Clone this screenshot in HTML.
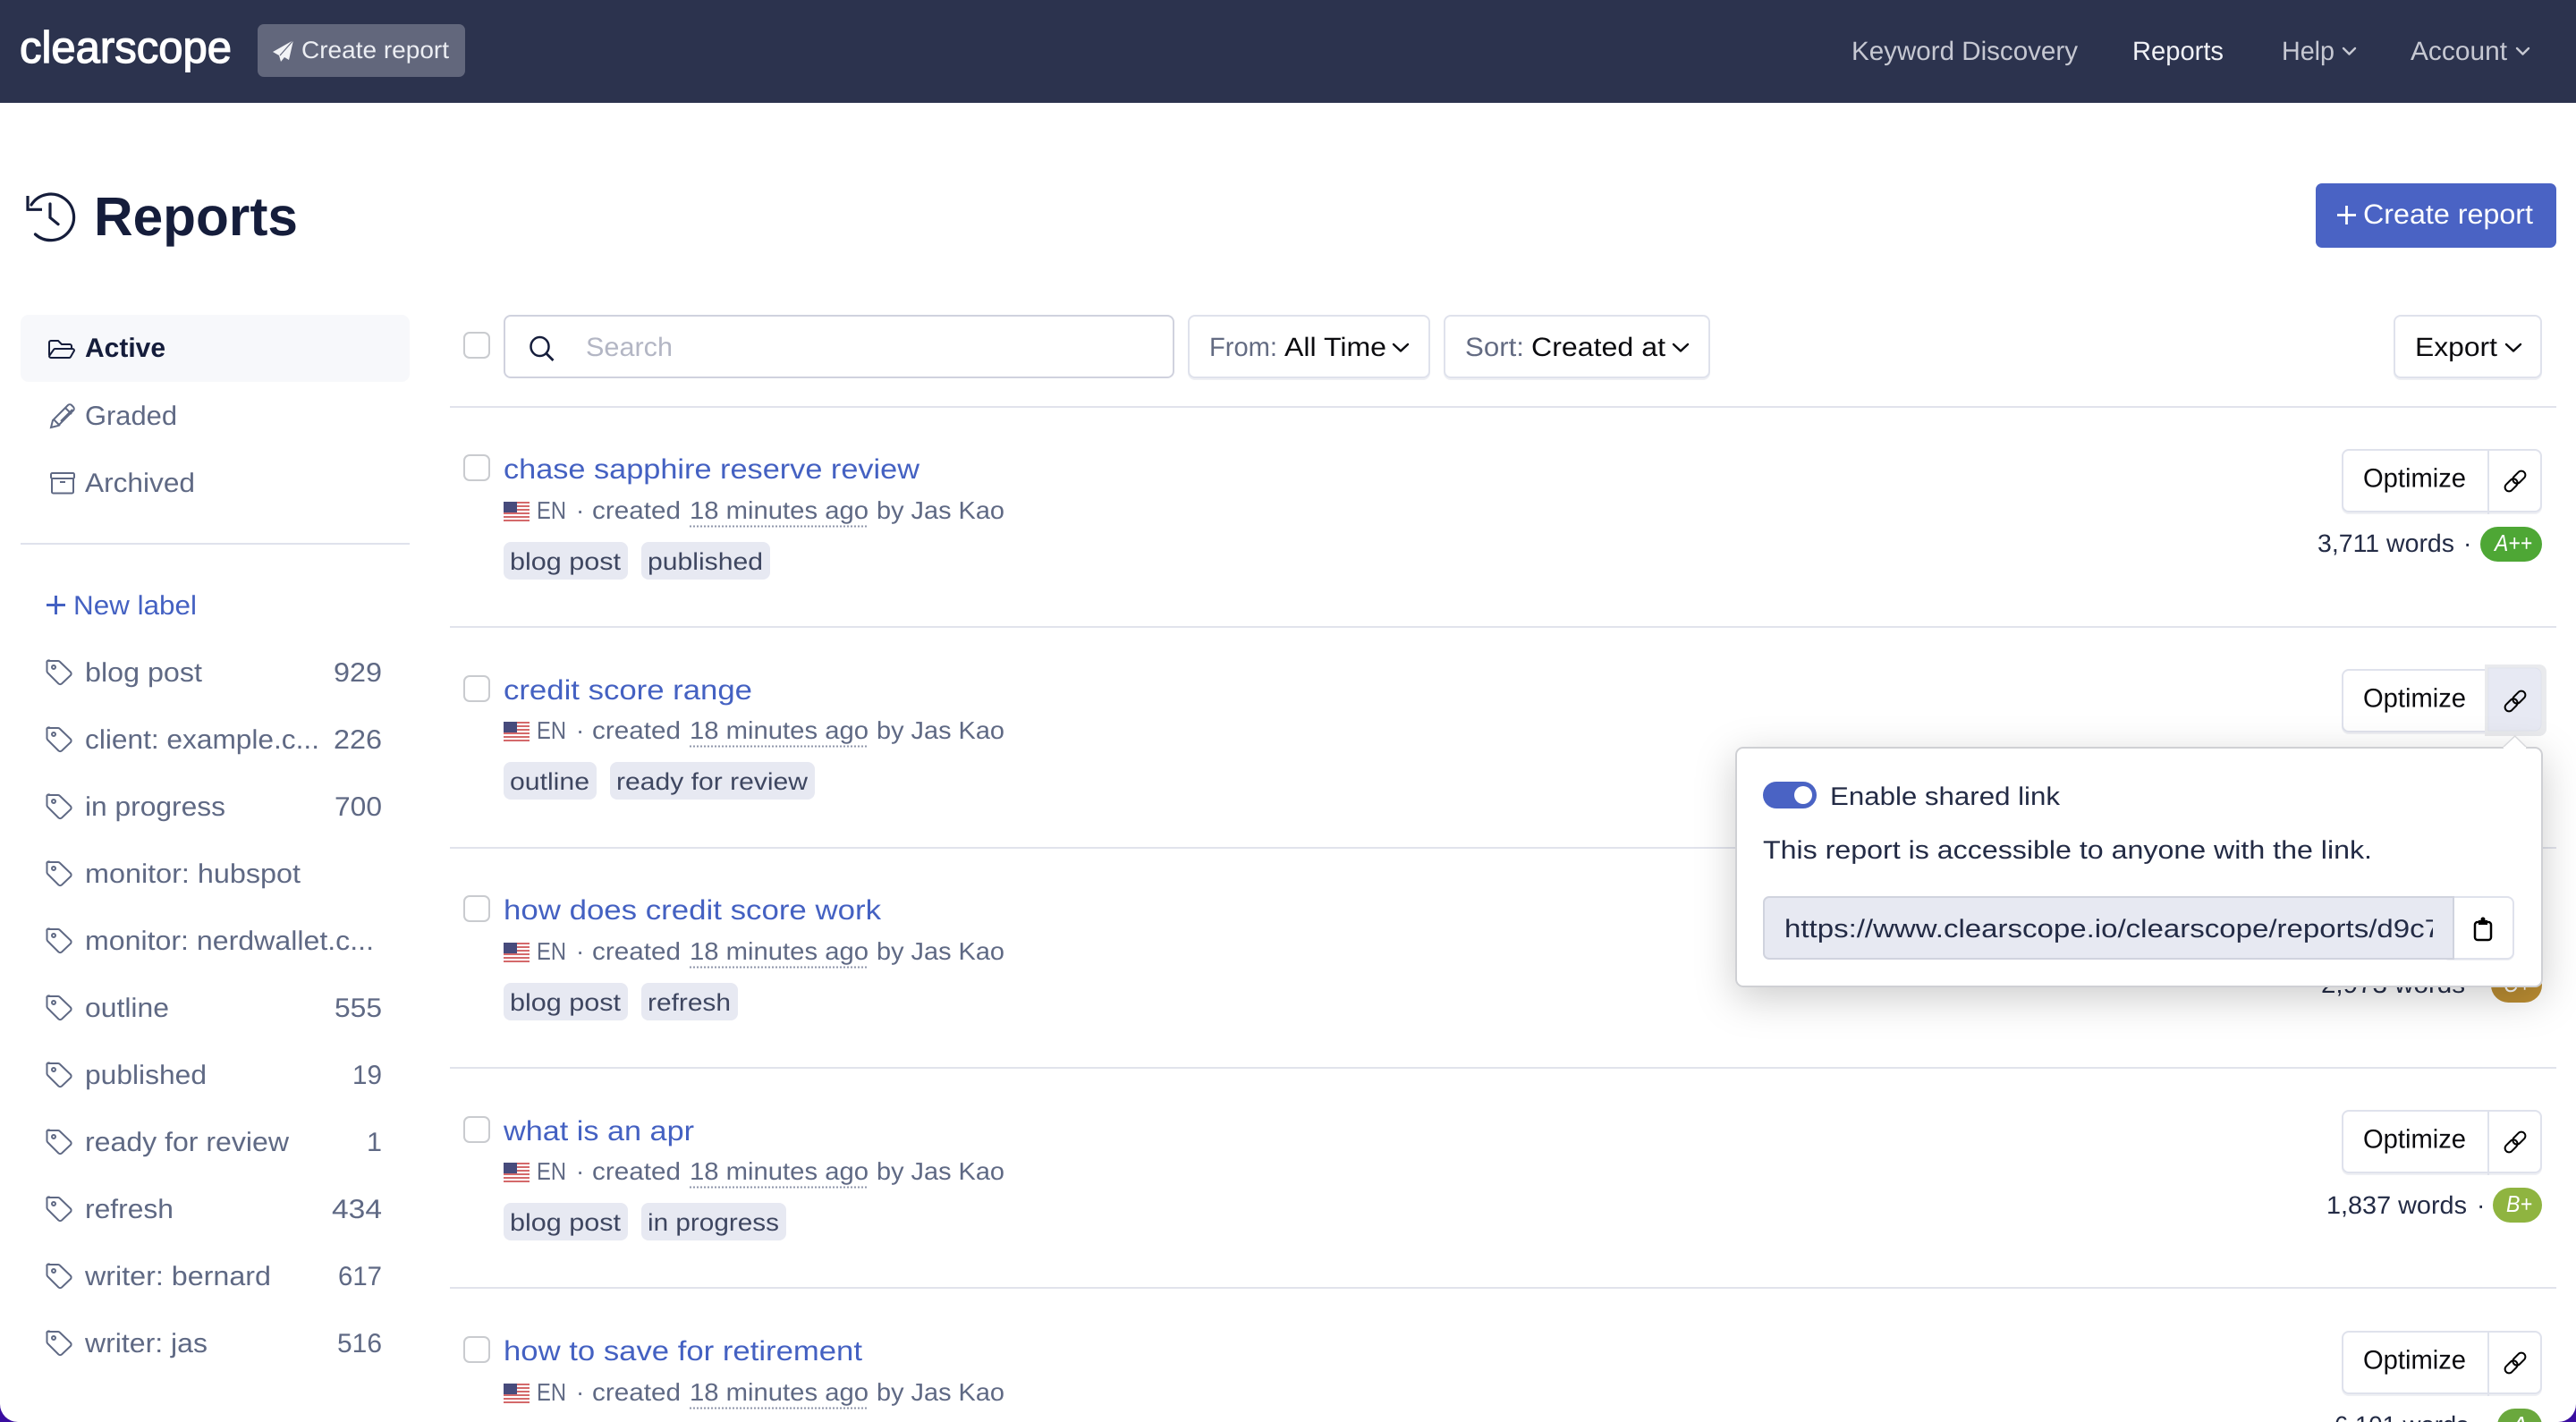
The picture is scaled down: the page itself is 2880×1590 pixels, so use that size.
<!DOCTYPE html>
<html lang="en"><head><meta charset="utf-8"><title>Reports - Clearscope</title>
<style>
html,body{margin:0;padding:0;background:#fff;width:2880px;height:1590px;overflow:hidden}
svg{display:block}
text{font-family:"Liberation Sans",Arial,sans-serif;text-rendering:geometricPrecision;white-space:pre}
.s{font-size:30px;fill:#5f6984}
.nav{font-size:29.5px;fill:#c6c8d2}
.ti{font-size:31px;fill:#4461c2}
.m{font-size:27.5px;fill:#5f6984}
.tg{font-size:27px;fill:#3e4660}
.b{font-size:29.5px;fill:#0b0b0f}
.w{font-size:28px;fill:#232b45}
.p{font-size:28.5px;fill:#232b45}
.g{font-size:26px;fill:#fff;font-style:italic}
.ln{fill:none;stroke:#000;stroke-width:2}
.ch{fill:none;stroke-width:2.4;stroke-linecap:round;stroke-linejoin:round}
</style></head><body>
<svg xmlns="http://www.w3.org/2000/svg" width="2880" height="1590" viewBox="0 0 2880 1590">
<defs>
<filter id="pop" x="-10%" y="-30%" width="120%" height="170%"><feDropShadow dx="0" dy="12" stdDeviation="22" flood-color="#000" flood-opacity=".2"/></filter>
<clipPath id="urlc"><rect x="1973" y="1004" width="747" height="67"/></clipPath>
<g id="tag" fill="none" stroke="#5f6984" stroke-width="2"><path d="M55 739h10a3 3 0 0 1 2 1l12 11.500a3 3 0 0 1 0 3.500l-10 9.500a3 3 0 0 1-3.500 0l-12-12a3 3 0 0 1-1-2v-9.500a2 2 0 0 1 2.500-2.500z"/><circle cx="60" cy="746" r="2"/></g>
<g id="link" class="ln"><rect x="-8" y="-4.500" width="16" height="9" rx="4.500" transform="translate(-4.400 4.400) rotate(-45)"/><rect x="-8" y="-4.500" width="16" height="9" rx="4.500" transform="translate(4.400 -4.400) rotate(-45)"/></g>
<g id="flag"><rect x="563" y="561" width="29" height="22" fill="#fff"/><g fill="#d4696b"><rect x="563" y="561" width="29" height="2"/><rect x="563" y="565" width="29" height="2"/><rect x="563" y="569" width="29" height="2"/><rect x="563" y="573" width="29" height="2"/><rect x="563" y="577" width="29" height="2"/><rect x="563" y="581" width="29" height="2"/></g><rect x="563" y="561" width="15" height="12" fill="#474b7c"/></g>
<g id="opt"><rect x="2618" y="504" width="224" height="71" rx="8" fill="#eff0f4"/><rect x="2619" y="503" width="222" height="69" rx="7" fill="#fff" stroke="#dfe2ec" stroke-width="2"/><rect x="2781" y="502" width="2" height="73" fill="#dfe2ec"/><text x="2642" y="544.500" class="b" textLength="115" lengthAdjust="spacingAndGlyphs">Optimize</text></g>
</defs>

<rect width="2880" height="1590" fill="#3a0ea0"/>
<path d="M0 0H2880V1570a20 20 0 0 1-20 20H20a20 20 0 0 1-20-20Z" fill="#fff"/>

<!-- nav -->
<rect width="2880" height="115" fill="#2c334e"/>
<text x="22" y="70" font-size="50" fill="#fff" stroke="#fff" stroke-width="1.300" textLength="237" lengthAdjust="spacingAndGlyphs">clearscope</text>
<rect x="288" y="27" width="232" height="59" rx="7" fill="#62677c"/>
<path d="M328 45L305 58L312 62L314 69L318 64L323 67Z" fill="#f2f3f6"/><path d="M328 45L313 62" stroke="#62677c" stroke-width="1.200"/>
<text x="337" y="65" font-size="27" fill="#eceef3" textLength="165" lengthAdjust="spacingAndGlyphs">Create report</text>
<text x="2070" y="67" class="nav" textLength="253" lengthAdjust="spacingAndGlyphs">Keyword Discovery</text>
<text x="2384" y="67" class="nav" style="fill:#f1f2f6" textLength="102" lengthAdjust="spacingAndGlyphs">Reports</text>
<text x="2551" y="67" class="nav" textLength="59" lengthAdjust="spacingAndGlyphs">Help</text>
<path d="M2620 54l6.500 6.500 6.500-6.500" class="ch" stroke="#c6c8d2"/>
<text x="2695" y="67" class="nav" textLength="108" lengthAdjust="spacingAndGlyphs">Account</text>
<path d="M2814 54l6.500 6.500 6.500-6.500" class="ch" stroke="#c6c8d2"/>

<!-- heading -->
<g fill="none" stroke="#151d3b" stroke-width="3.200"><path d="M35 229A25.800 25.800 0 1 1 39.500 262" stroke-linecap="round"/><path d="M31 219V234.300H47"/><path d="M56 228V243.300L65 250.700" stroke-linecap="round"/></g>
<text x="105" y="263" font-size="61" font-weight="700" fill="#151d3b" textLength="228" lengthAdjust="spacingAndGlyphs">Reports</text>
<rect x="2589" y="205" width="269" height="72" rx="7" fill="#4a63c4"/>
<path d="M2623.500 230v21M2613 240.500h21" stroke="#fff" stroke-width="2.800"/>
<text x="2642" y="250" font-size="31" fill="#fff" textLength="190" lengthAdjust="spacingAndGlyphs">Create report</text>

<!-- sidebar -->
<rect x="23" y="352" width="435" height="75" rx="9" fill="#f7f8fb"/>
<path d="M55 397V383a2 2 0 0 1 2-2h8l4 4h9a2 2 0 0 1 2 2v3M55 398l5-7a2 2 0 0 1 2-1h19a2 2 0 0 1 2 2l-4 7a2 2 0 0 1-2 1H57a2 2 0 0 1-2-2z" fill="none" stroke="#151d3b" stroke-width="2"/>
<text x="95" y="399" font-size="30" font-weight="700" fill="#151d3b" textLength="90" lengthAdjust="spacingAndGlyphs">Active</text>
<path d="M57 478l2-8L76 453a3 3 0 0 1 4 0l2 2a3 3 0 0 1 0 4L65 476zM60 469l7 7M73 456l7 7M63 466l13-13M68 471l13-13" fill="none" stroke="#5f6984" stroke-width="2"/>
<text x="95" y="475" class="s" textLength="103" lengthAdjust="spacingAndGlyphs">Graded</text>
<path d="M58 535v15a1.500 1.500 0 0 0 1.500 1.500h21a1.500 1.500 0 0 0 1.500-1.500v-15M67 539h6" fill="none" stroke="#5f6984" stroke-width="2"/><rect x="57" y="529" width="26" height="6" rx="1.500" fill="none" stroke="#5f6984" stroke-width="2"/>
<text x="95" y="550" class="s" textLength="123" lengthAdjust="spacingAndGlyphs">Archived</text>
<rect x="23" y="607" width="435" height="2" fill="#dfe2ec"/>
<path d="M62.500 666v21M52 676.500h21" stroke="#4461c2" stroke-width="3"/>
<text x="82" y="687" class="s" style="fill:#4461c2" textLength="138" lengthAdjust="spacingAndGlyphs">New label</text>

<use href="#tag"/><text x="95" y="762" class="s" textLength="131" lengthAdjust="spacingAndGlyphs">blog post</text><text x="373" y="762" class="s" textLength="54" lengthAdjust="spacingAndGlyphs">929</text>
<use href="#tag" y="75"/><text x="95" y="837" class="s" textLength="262" lengthAdjust="spacingAndGlyphs">client: example.c...</text><text x="373" y="837" class="s" textLength="54" lengthAdjust="spacingAndGlyphs">226</text>
<use href="#tag" y="150"/><text x="95" y="912" class="s" textLength="157" lengthAdjust="spacingAndGlyphs">in progress</text><text x="374" y="912" class="s" textLength="53" lengthAdjust="spacingAndGlyphs">700</text>
<use href="#tag" y="225"/><text x="95" y="987" class="s" textLength="241" lengthAdjust="spacingAndGlyphs">monitor: hubspot</text>
<use href="#tag" y="300"/><text x="95" y="1062" class="s" textLength="323" lengthAdjust="spacingAndGlyphs">monitor: nerdwallet.c...</text>
<use href="#tag" y="375"/><text x="95" y="1137" class="s" textLength="94" lengthAdjust="spacingAndGlyphs">outline</text><text x="374" y="1137" class="s" textLength="53" lengthAdjust="spacingAndGlyphs">555</text>
<use href="#tag" y="450"/><text x="95" y="1212" class="s" textLength="136" lengthAdjust="spacingAndGlyphs">published</text><text x="394" y="1212" class="s" textLength="33" lengthAdjust="spacingAndGlyphs">19</text>
<use href="#tag" y="525"/><text x="95" y="1287" class="s" textLength="228" lengthAdjust="spacingAndGlyphs">ready for review</text><text x="410" y="1287" class="s" textLength="17" lengthAdjust="spacingAndGlyphs">1</text>
<use href="#tag" y="600"/><text x="95" y="1362" class="s" textLength="99" lengthAdjust="spacingAndGlyphs">refresh</text><text x="371" y="1362" class="s" textLength="56" lengthAdjust="spacingAndGlyphs">434</text>
<use href="#tag" y="675"/><text x="95" y="1437" class="s" textLength="208" lengthAdjust="spacingAndGlyphs">writer: bernard</text><text x="378" y="1437" class="s" textLength="49" lengthAdjust="spacingAndGlyphs">617</text>
<use href="#tag" y="750"/><text x="95" y="1512" class="s" textLength="137" lengthAdjust="spacingAndGlyphs">writer: jas</text><text x="377" y="1512" class="s" textLength="50" lengthAdjust="spacingAndGlyphs">516</text>

<!-- toolbar -->
<rect x="519" y="372" width="28" height="28" rx="6" fill="#fff" stroke="#c9cbcf" stroke-width="2"/>
<rect x="564" y="353" width="748" height="69" rx="7" fill="#fff" stroke="#d0d2de" stroke-width="2"/>
<ellipse cx="603.500" cy="387.500" rx="10" ry="10.500" fill="none" stroke="#151d3b" stroke-width="2.500"/><path d="M610.500 395l8 8" stroke="#151d3b" stroke-width="2.800"/>
<text x="655" y="398" font-size="29.500" fill="#b3b6c4" textLength="97" lengthAdjust="spacingAndGlyphs">Search</text>
<rect x="1328" y="353" width="271" height="72" rx="8" fill="#eff0f4"/><rect x="1329" y="353" width="269" height="69" rx="7" fill="#fff" stroke="#dfe2ec" stroke-width="2"/>
<text x="1352" y="398" class="b" style="fill:#636b82" textLength="76" lengthAdjust="spacingAndGlyphs">From:</text><text x="1436" y="398" class="b" textLength="114" lengthAdjust="spacingAndGlyphs">All Time</text>
<path d="M1558 385l8 7.500 8-7.500" class="ch" stroke="#0b0b0f"/>
<rect x="1614" y="353" width="298" height="72" rx="8" fill="#eff0f4"/><rect x="1615" y="353" width="296" height="69" rx="7" fill="#fff" stroke="#dfe2ec" stroke-width="2"/>
<text x="1638" y="398" class="b" style="fill:#636b82" textLength="66" lengthAdjust="spacingAndGlyphs">Sort:</text><text x="1712" y="398" class="b" textLength="150" lengthAdjust="spacingAndGlyphs">Created at</text>
<path d="M1871 385l8 7.500 8-7.500" class="ch" stroke="#0b0b0f"/>
<rect x="2676" y="353" width="166" height="72" rx="8" fill="#eff0f4"/><rect x="2677" y="353" width="164" height="69" rx="7" fill="#fff" stroke="#dfe2ec" stroke-width="2"/>
<text x="2700" y="398" class="b" textLength="92" lengthAdjust="spacingAndGlyphs">Export</text>
<path d="M2802 385l8 7.500 8-7.500" class="ch" stroke="#0b0b0f"/>

<!-- separators -->
<g fill="#e1e3ec"><rect x="503" y="454" width="2355" height="2"/><rect x="503" y="700" width="2355" height="2"/><rect x="503" y="947" width="2355" height="2"/><rect x="503" y="1193" width="2355" height="2"/><rect x="503" y="1439" width="2355" height="2"/></g>

<!-- row 1 -->
<g>
<rect x="519" y="509" width="28" height="28" rx="6" fill="#fff" stroke="#c9cbcf" stroke-width="2"/>
<text x="563" y="535" class="ti" textLength="465" lengthAdjust="spacingAndGlyphs">chase sapphire reserve review</text>
<use href="#flag"/><text x="600" y="580" class="m" textLength="33" lengthAdjust="spacingAndGlyphs">EN</text><text x="644" y="580" class="m">·</text><text x="662" y="580" class="m" textLength="99" lengthAdjust="spacingAndGlyphs">created</text><text x="771" y="580" class="m" textLength="200" lengthAdjust="spacingAndGlyphs">18 minutes ago</text><path d="M771 588.500H971" stroke="#8f96aa" stroke-width="2" stroke-dasharray="2 2"/><text x="980" y="580" class="m" textLength="143" lengthAdjust="spacingAndGlyphs">by Jas Kao</text>
<rect x="563" y="606" width="139" height="42" rx="8" fill="#e7e9f2"/><text x="570" y="637" class="tg" textLength="124" lengthAdjust="spacingAndGlyphs">blog post</text>
<rect x="717" y="606" width="144" height="42" rx="8" fill="#e7e9f2"/><text x="724" y="637" class="tg" textLength="129" lengthAdjust="spacingAndGlyphs">published</text>
<use href="#opt"/><use href="#link" x="2812" y="538"/>
<text x="2591" y="617" class="w" textLength="153" lengthAdjust="spacingAndGlyphs">3,711 words</text><text x="2754" y="617" class="w">·</text>
<rect x="2773" y="589" width="69" height="39" rx="19.500" fill="#4ea735"/><text x="2789" y="616" class="g" textLength="42" lengthAdjust="spacingAndGlyphs">A++</text>
</g>
<!-- row 2 -->
<g transform="translate(0 246)">
<rect x="519" y="510" width="28" height="28" rx="6" fill="#fff" stroke="#c9cbcf" stroke-width="2"/>
<text x="563" y="536" class="ti" textLength="278" lengthAdjust="spacingAndGlyphs">credit score range</text>
<use href="#flag"/><text x="600" y="580" class="m" textLength="33" lengthAdjust="spacingAndGlyphs">EN</text><text x="644" y="580" class="m">·</text><text x="662" y="580" class="m" textLength="99" lengthAdjust="spacingAndGlyphs">created</text><text x="771" y="580" class="m" textLength="200" lengthAdjust="spacingAndGlyphs">18 minutes ago</text><path d="M771 588.500H971" stroke="#8f96aa" stroke-width="2" stroke-dasharray="2 2"/><text x="980" y="580" class="m" textLength="143" lengthAdjust="spacingAndGlyphs">by Jas Kao</text>
<rect x="563" y="606" width="104" height="42" rx="8" fill="#e7e9f2"/><text x="570" y="637" class="tg" textLength="89" lengthAdjust="spacingAndGlyphs">outline</text>
<rect x="682" y="606" width="229" height="42" rx="8" fill="#e7e9f2"/><text x="689" y="637" class="tg" textLength="214" lengthAdjust="spacingAndGlyphs">ready for review</text>
<rect x="2790" y="589" width="52" height="39" rx="19.500" fill="#c0622b"/>
<use href="#opt"/>
<rect x="2778" y="497" width="69" height="80" rx="8" fill="#e9eaed"/><rect x="2778" y="497" width="10" height="80" fill="#e9eaed"/>
<path d="M2782 501h52a7 7 0 0 1 7 7v56a7 7 0 0 1-7 7h-52z" fill="#e7e9f3" stroke="#dfe2ec" stroke-width="1"/>
<use href="#link" x="2812" y="538"/>
</g>
<!-- row 3 -->
<g transform="translate(0 493)">
<rect x="519" y="509" width="28" height="28" rx="6" fill="#fff" stroke="#c9cbcf" stroke-width="2"/>
<text x="563" y="535" class="ti" textLength="422" lengthAdjust="spacingAndGlyphs">how does credit score work</text>
<use href="#flag"/><text x="600" y="580" class="m" textLength="33" lengthAdjust="spacingAndGlyphs">EN</text><text x="644" y="580" class="m">·</text><text x="662" y="580" class="m" textLength="99" lengthAdjust="spacingAndGlyphs">created</text><text x="771" y="580" class="m" textLength="200" lengthAdjust="spacingAndGlyphs">18 minutes ago</text><path d="M771 588.500H971" stroke="#8f96aa" stroke-width="2" stroke-dasharray="2 2"/><text x="980" y="580" class="m" textLength="143" lengthAdjust="spacingAndGlyphs">by Jas Kao</text>
<rect x="563" y="606" width="139" height="42" rx="8" fill="#e7e9f2"/><text x="570" y="637" class="tg" textLength="124" lengthAdjust="spacingAndGlyphs">blog post</text>
<rect x="717" y="606" width="108" height="42" rx="8" fill="#e7e9f2"/><text x="724" y="637" class="tg" textLength="93" lengthAdjust="spacingAndGlyphs">refresh</text>
<text x="2595" y="617" class="w" textLength="161" lengthAdjust="spacingAndGlyphs">2,973 words</text><text x="2768" y="617" class="w">·</text>
<rect x="2785" y="589" width="57" height="39" rx="19.500" fill="#bb8d32"/><text x="2799" y="616" class="g" textLength="30" lengthAdjust="spacingAndGlyphs">C+</text>
</g>
<!-- row 4 -->
<g transform="translate(0 739)">
<rect x="519" y="510" width="28" height="28" rx="6" fill="#fff" stroke="#c9cbcf" stroke-width="2"/>
<text x="563" y="536" class="ti" textLength="213" lengthAdjust="spacingAndGlyphs">what is an apr</text>
<use href="#flag"/><text x="600" y="580" class="m" textLength="33" lengthAdjust="spacingAndGlyphs">EN</text><text x="644" y="580" class="m">·</text><text x="662" y="580" class="m" textLength="99" lengthAdjust="spacingAndGlyphs">created</text><text x="771" y="580" class="m" textLength="200" lengthAdjust="spacingAndGlyphs">18 minutes ago</text><path d="M771 588.500H971" stroke="#8f96aa" stroke-width="2" stroke-dasharray="2 2"/><text x="980" y="580" class="m" textLength="143" lengthAdjust="spacingAndGlyphs">by Jas Kao</text>
<rect x="563" y="606" width="139" height="42" rx="8" fill="#e7e9f2"/><text x="570" y="637" class="tg" textLength="124" lengthAdjust="spacingAndGlyphs">blog post</text>
<rect x="717" y="606" width="162" height="42" rx="8" fill="#e7e9f2"/><text x="724" y="637" class="tg" textLength="147" lengthAdjust="spacingAndGlyphs">in progress</text>
<use href="#opt"/><use href="#link" x="2812" y="538"/>
<text x="2601" y="618" class="w" textLength="157" lengthAdjust="spacingAndGlyphs">1,837 words</text><text x="2769" y="618" class="w">·</text>
<rect x="2787" y="589" width="55" height="39" rx="19.500" fill="#8fb440"/><text x="2802" y="616" class="g" textLength="29" lengthAdjust="spacingAndGlyphs">B+</text>
</g>
<!-- row 5 -->
<g transform="translate(0 986)">
<rect x="519" y="509" width="28" height="28" rx="6" fill="#fff" stroke="#c9cbcf" stroke-width="2"/>
<text x="563" y="535" class="ti" textLength="401" lengthAdjust="spacingAndGlyphs">how to save for retirement</text>
<use href="#flag"/><text x="600" y="580" class="m" textLength="33" lengthAdjust="spacingAndGlyphs">EN</text><text x="644" y="580" class="m">·</text><text x="662" y="580" class="m" textLength="99" lengthAdjust="spacingAndGlyphs">created</text><text x="771" y="580" class="m" textLength="200" lengthAdjust="spacingAndGlyphs">18 minutes ago</text><path d="M771 588.500H971" stroke="#8f96aa" stroke-width="2" stroke-dasharray="2 2"/><text x="980" y="580" class="m" textLength="143" lengthAdjust="spacingAndGlyphs">by Jas Kao</text>
<use href="#opt"/><use href="#link" x="2812" y="538"/>
<text x="2610" y="617" class="w" textLength="150" lengthAdjust="spacingAndGlyphs">6,101 words</text><text x="2774" y="617" class="w">·</text>
<rect x="2792" y="589" width="50" height="39" rx="19.500" fill="#6aa83d"/><text x="2808" y="616" class="g" textLength="18" lengthAdjust="spacingAndGlyphs">A</text>
</g>

<!-- popover -->
<g filter="url(#pop)"><rect x="1941" y="836" width="901" height="267" rx="8" fill="#fff" stroke="#cfd0d4" stroke-width="2"/></g>
<path d="M2798 836L2811.700 823L2825 836" fill="#fff" stroke="#d8d9dc" stroke-width="1.500"/><rect x="2799" y="835" width="25" height="3" fill="#fff"/>
<rect x="1971" y="874" width="60" height="30" rx="15" fill="#4a63c4"/><circle cx="2016" cy="889" r="10" fill="#fff"/>
<text x="2046" y="900" class="p" textLength="257" lengthAdjust="spacingAndGlyphs">Enable shared link</text>
<text x="1971" y="960" class="p" textLength="681" lengthAdjust="spacingAndGlyphs">This report is accessible to anyone with the link.</text>
<rect x="2730" y="1003" width="81" height="71" rx="8" fill="#eff0f4"/>
<rect x="2730" y="1003" width="80" height="69" rx="7" fill="#fff" stroke="#dfe2ec" stroke-width="2"/>
<path d="M2743 1003h-765a6 6 0 0 0-6 6v57a6 6 0 0 0 6 6h765z" fill="#e7e9f2" stroke="#d0d3de" stroke-width="2"/>
<text x="1995" y="1048" class="p" clip-path="url(#urlc)" textLength="734" lengthAdjust="spacingAndGlyphs">https://www.clearscope.io/clearscope/reports/d9c7</text>
<rect x="2767" y="1031" width="18" height="20" rx="3" fill="none" stroke="#000" stroke-width="2.500"/><rect x="2771" y="1029" width="10" height="5" fill="#000"/><circle cx="2776" cy="1028" r="2.500" fill="#000"/>
</svg>
</body></html>
